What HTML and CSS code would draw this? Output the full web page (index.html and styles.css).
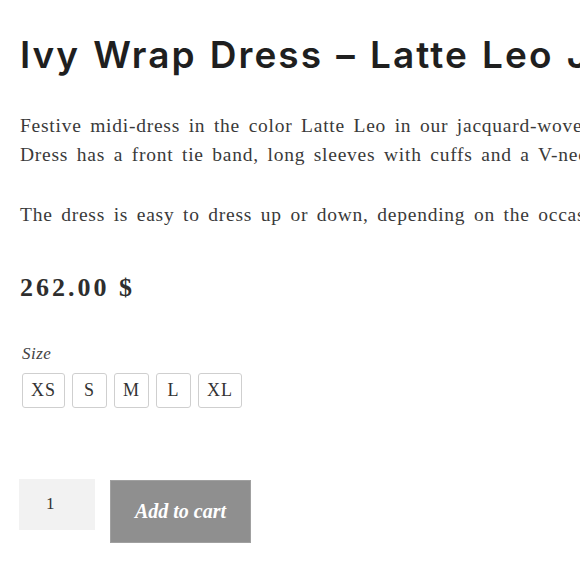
FILE: index.html
```html
<!DOCTYPE html>
<html>
<head>
<meta charset="utf-8">
<link rel="stylesheet" href="styles.css">
</head>
<body>
<div class="product">
  <h1 class="title">Ivy Wrap Dress – Latte Leo Jacquard</h1>
  <div class="desc">
    <p><span class="line">Festive midi-dress in the color Latte Leo in our jacquard-woven fabric with a subtle shine. The Ivy Wrap</span> <span class="line">Dress has a front tie band, long sleeves with cuffs and a V-neck.</span></p>
    <p><span class="line">The dress is easy to dress up or down, depending on the occasion.</span></p>
  </div>
  <div class="price">262.00 $</div>
  <div class="variations">
    <div class="label">Size</div>
    <div class="swatches">
      <span class="swatch">XS</span>
      <span class="swatch">S</span>
      <span class="swatch">M</span>
      <span class="swatch">L</span>
      <span class="swatch">XL</span>
    </div>
  </div>
  <div class="cart">
    <div class="qty">1</div>
    <button class="add">Add to cart</button>
  </div>
</div>
</body>
</html>
```
FILE: styles.css
```css
html, body {
  margin: 0;
  padding: 0;
  background: #fff;
  overflow: hidden;
}
.product {
  padding: 0 0 0 20px;
  width: 1000px;
  font-family: "Liberation Serif", serif;
  color: #333;
}
.title {
  font-family: Inter, "Noto Sans", sans-serif;
  font-weight: 600;
  font-size: 37px;
  letter-spacing: 2px;
  word-spacing: 2px;
  color: #1f1f1f;
  margin: 0;
  padding-top: 33px;
  line-height: 44px;
  white-space: nowrap;
}
.desc {
  margin-top: 34px;
  font-size: 19.5px;
  letter-spacing: 0.75px;
  word-spacing: 3px;
  line-height: 29px;
  color: #3a3a3a;
}
.desc p {
  margin: 0 0 31px 0;
}
.line {
  display: block;
  white-space: nowrap;
}
.price {
  margin-top: 44px;
  font-size: 26px;
  font-weight: bold;
  letter-spacing: 3px;
  color: #2e2e2e;
  line-height: 30px;
}
.variations {
  margin-top: 40px;
  padding-left: 2px;
}
.label {
  font-style: italic;
  font-size: 17px;
  letter-spacing: 0.5px;
  line-height: 22px;
  color: #444;
}
.swatches {
  display: flex;
  gap: 7px;
  margin-top: 8px;
}
.swatch {
  box-sizing: border-box;
  height: 35px;
  min-width: 35px;
  padding: 0 8px;
  border: 1px solid #cfcfcf;
  border-radius: 3px;
  display: flex;
  align-items: center;
  justify-content: center;
  font-size: 18px;
  letter-spacing: 1px;
  color: #333;
}
.cart {
  display: flex;
  align-items: flex-start;
  gap: 15px;
  margin-top: 71px;
  margin-left: -1px;
}
.qty {
  width: 76px;
  height: 51px;
  background: #f2f2f2;
  box-sizing: border-box;
  padding: 15px 0 0 27px;
  font-size: 17px;
  line-height: 20px;
  color: #333;
}
.add {
  margin-top: 1px;
  width: 141px;
  height: 63px;
  background: #8f8f8f;
  border: 1px solid #a0a0a0;
  color: #fff;
  font-family: "Liberation Serif", serif;
  font-style: italic;
  font-weight: bold;
  font-size: 20px;
  padding: 0;
}
```
